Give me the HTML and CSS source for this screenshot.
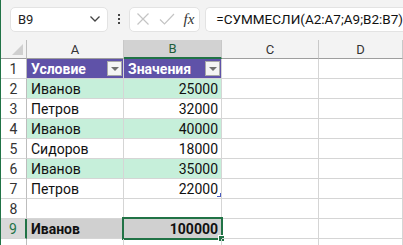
FILE: index.html
```html
<!DOCTYPE html>
<html lang="ru">
<head>
  <meta charset="UTF-8" />
  <title>Лист1</title>
  <link rel="stylesheet" href="styles.css">
</head>
<body>

  <!-- Formula bar -->
  <div class="toolbar">
    <div class="name-box">
      <span>B9</span>
      <svg class="chevron" width="12" height="8" viewBox="0 0 12 8"><path d="M1.5 1.5 L6 6 L10.5 1.5" fill="none" stroke="#444" stroke-width="1.3"/></svg>
    </div>
    <div class="dots"><i></i><i></i><i></i></div>
    <div class="fx-buttons">
      <svg width="14" height="14" viewBox="0 0 14 14"><path d="M1.5 1.5 L12.5 12.5 M12.5 1.5 L1.5 12.5" stroke="#c4c4c4" stroke-width="1.2"/></svg>
      <svg width="16" height="14" viewBox="0 0 16 14"><path d="M1 7.5 L5.5 12 L15 2" fill="none" stroke="#c4c4c4" stroke-width="1.2"/></svg>
      <span class="fx">fx</span>
    </div>
    <div class="formula">=СУММЕСЛИ(A2:A7;A9;B2:B7)</div>
  </div>

  <!-- Sheet grid -->
  <div class="sheet">
    <div class="corner"></div>
    <div class="col-head">A</div>
    <div class="col-head active">B</div>
    <div class="col-head">C</div>
    <div class="col-head">D</div>

    <div class="row-head">1</div>
    <div class="cell th">Условие<span class="filter"></span></div>
    <div class="cell th">Значения<span class="filter"></span></div>
    <div class="cell"></div><div class="cell"></div>

    <div class="row-head">2</div>
    <div class="cell band">Иванов</div>
    <div class="cell band num">25000</div>
    <div class="cell"></div><div class="cell"></div>

    <div class="row-head">3</div>
    <div class="cell">Петров</div>
    <div class="cell num">32000</div>
    <div class="cell"></div><div class="cell"></div>

    <div class="row-head">4</div>
    <div class="cell band">Иванов</div>
    <div class="cell band num">40000</div>
    <div class="cell"></div><div class="cell"></div>

    <div class="row-head">5</div>
    <div class="cell">Сидоров</div>
    <div class="cell num">18000</div>
    <div class="cell"></div><div class="cell"></div>

    <div class="row-head">6</div>
    <div class="cell band">Иванов</div>
    <div class="cell band num">35000</div>
    <div class="cell"></div><div class="cell"></div>

    <div class="row-head">7</div>
    <div class="cell">Петров</div>
    <div class="cell num table-end">22000</div>
    <div class="cell"></div><div class="cell"></div>

    <div class="row-head">8</div>
    <div class="cell"></div><div class="cell"></div>
    <div class="cell"></div><div class="cell"></div>

    <div class="row-head active">9</div>
    <div class="cell total">Иванов</div>
    <div class="cell total num selected">100000</div>
    <div class="cell"></div><div class="cell"></div>

    <div class="row-head"></div>
    <div class="cell"></div><div class="cell"></div>
    <div class="cell"></div><div class="cell"></div>
  </div>

</body>
</html>
```

FILE: styles.css
```css
body {
  margin: 0;
  width: 403px;
  height: 245px;
  overflow: hidden;
  background: #ffffff;
  border-left: 1px solid #217346;
  box-sizing: border-box;
  font-family: Roboto, "Liberation Sans", sans-serif;
}

/* Formula bar */
.toolbar {
  height: 40px;
  background: #f3f3f3;
  display: flex;
  align-items: center;
  padding: 0 0 2px 9px;
  box-sizing: border-box;
}

.name-box {
  width: 101px;
  height: 25px;
  box-sizing: border-box;
  background: #fff;
  border: 1px solid #e3e3e3;
  border-radius: 5px;
  display: flex;
  align-items: center;
  justify-content: space-between;
  padding: 0 6px 0 7px;
  font-size: 13px;
  color: #222;
}

.dots {
  width: 22px;
  display: flex;
  flex-direction: column;
  align-items: center;
  gap: 2px;
}

.dots i {
  width: 2px;
  height: 2px;
  background: #444;
}

.fx-buttons {
  width: 73px;
  height: 25px;
  box-sizing: border-box;
  background: #fff;
  border: 1px solid #e3e3e3;
  border-radius: 5px;
  display: flex;
  align-items: center;
  justify-content: space-between;
  padding: 0 5px 0 6px;
}

.fx {
  font-family: "Liberation Serif", serif;
  font-style: italic;
  font-size: 15px;
  color: #333;
}

.formula {
  flex: 1;
  margin-left: 5px;
  height: 25px;
  box-sizing: border-box;
  background: #fff;
  border: 1px solid #e3e3e3;
  border-right: none;
  border-radius: 5px 0 0 5px;
  padding-left: 10px;
  display: flex;
  align-items: center;
  font-size: 13.5px;
  color: #111;
  white-space: nowrap;
}

/* Sheet */
.sheet {
  display: grid;
  grid-template-columns: 26px 97px 98px 97px 1fr;
  grid-template-rows: 19px repeat(10, 20px);
  font-size: 14px;
  color: #111;
}

.corner {
  background: #f3f3f3;
  border-right: 1px solid #bdbdbd;
  border-bottom: 1px solid #9e9e9e;
  position: relative;
}

.corner::after {
  content: "";
  position: absolute;
  right: 3px;
  bottom: 3px;
  border-left: 11px solid transparent;
  border-bottom: 11px solid #cfcfcf;
}

.col-head {
  background: #f3f3f3;
  border-right: 1px solid #c8c8c8;
  border-bottom: 1px solid #9e9e9e;
  display: flex;
  align-items: center;
  justify-content: center;
  font-size: 13px;
  color: #333;
}

.col-head.active {
  background: #d2d2d2;
  border-bottom: 2px solid #217346;
  color: #1d5e3a;
}

.row-head {
  background: #fff;
  border-right: 1px solid #bdbdbd;
  border-bottom: 1px solid #d5d5d5;
  display: flex;
  align-items: center;
  justify-content: center;
  color: #333;
}

.row-head.active {
  background: #d9d9d9;
  border-right: 2px solid #217346;
  color: #217346;
}

.cell {
  border-right: 1px solid #d5d5d5;
  border-bottom: 1px solid #d5d5d5;
  display: flex;
  align-items: center;
  padding: 0 3px 0 4px;
  white-space: nowrap;
  position: relative;
}

.cell.num {
  justify-content: flex-end;
}

.cell.th {
  background: #5f52a8;
  color: #fff;
  font-weight: bold;
  justify-content: space-between;
  padding-right: 1px;
}

.cell.band {
  background: #c6efda;
}

.cell.total {
  background: #d0d0d0;
  font-weight: bold;
}

.filter {
  width: 15px;
  height: 15px;
  box-sizing: border-box;
  background: #f4f4f4;
  border: 1px solid #a9a9a9;
  position: relative;
}

.filter::after {
  content: "";
  position: absolute;
  left: 3px;
  top: 5px;
  border-left: 4px solid transparent;
  border-right: 4px solid transparent;
  border-top: 4px solid #707070;
}

/* table resize handle */
.table-end::after {
  content: "";
  position: absolute;
  right: 0;
  bottom: 1px;
  width: 3px;
  height: 3px;
  border-right: 1px solid #4a5cc0;
  border-bottom: 1px solid #4a5cc0;
}

/* active cell */
.selected::before {
  content: "";
  position: absolute;
  left: -2px;
  top: -2px;
  right: -2px;
  bottom: -2px;
  border: 2px solid #217346;
}

.selected::after {
  content: "";
  position: absolute;
  right: -4px;
  bottom: -4px;
  width: 5px;
  height: 5px;
  background: #217346;
  border: 1px solid #fff;
}
```
